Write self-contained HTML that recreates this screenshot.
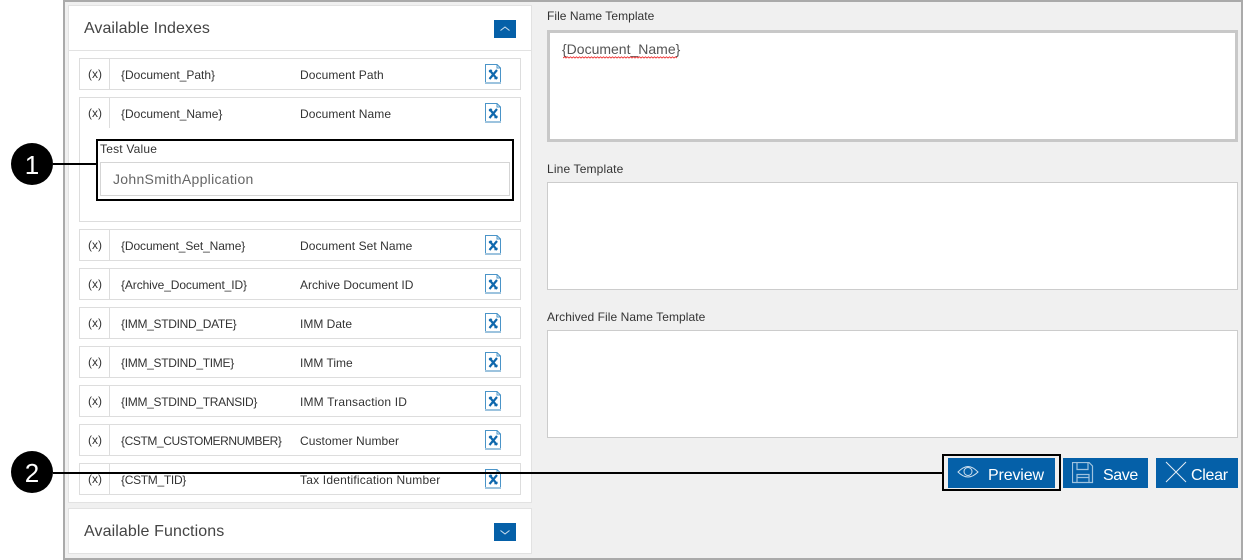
<!DOCTYPE html>
<html><head><meta charset="utf-8"><style>
html,body{margin:0;padding:0;width:1243px;height:560px;overflow:hidden;background:#fff;font-family:"Liberation Sans",sans-serif;color:#333}
.a{position:absolute;box-sizing:border-box}
.t{position:absolute;white-space:nowrap;font-size:12px;line-height:14px;color:#333}
.row{position:absolute;left:79px;width:442px;box-sizing:border-box;background:#fff;border:1px solid #ddd}
.row i{position:absolute;left:29px;top:0;height:30px;width:1px;background:#ddd}
.h{position:absolute;left:84px;font-size:16px;line-height:20px;color:#444;white-space:nowrap}
.ta{position:absolute;left:547px;width:691px;background:#fff;box-sizing:border-box;border:1px solid #ccc}
.btn{position:absolute;top:458px;height:30px;background:#0560a8;color:#fff;font-size:16px;line-height:36px;white-space:nowrap;box-sizing:border-box}
.c{position:absolute;left:11px;width:42px;height:42px;border-radius:50%;background:#000;color:#fff;font-size:26px;line-height:44px;text-align:center}
svg{position:absolute}
</style></head><body>
<div class="a" style="left:63px;top:0;width:1180px;height:560px;background:#f0f0f0;border:2px solid #aaa;border-right-width:2px"></div>

<div class="a" style="left:68px;top:5px;width:464px;height:498px;background:#fff;border:1px solid #e2e2e2"></div>
<div class="a" style="left:69px;top:50px;width:462px;height:1px;background:#e2e2e2"></div>
<div class="h" style="top:19px;letter-spacing:.05px">Available Indexes</div>
<div class="a" style="left:494px;top:20px;width:22px;height:18px;background:#0560a8"></div>
<svg style="left:494px;top:20px" width="22" height="18"><path d="M6.500 10.500 11 7l4.500 3.500" fill="none" stroke="#cfe0ef" stroke-width="1"/></svg>

<svg width="0" height="0" style="position:absolute"><defs><symbol id="d" viewBox="0 0 16 20"><path d="M.5 .5H12L15.500 4V19.500H.5Z" fill="#fff" stroke="#4a94c8" stroke-width="1"/><path d="M12 .5V4H15.500" fill="none" stroke="#4a94c8"/><rect x="0" y="18" width="16" height="2" fill="#9cc3de"/><path d="M4.500 6 12 15M12 6 4.500 15" stroke="#0f68ad" stroke-width="2.200" fill="none"/><path d="M4 8 7 6M9.500 15 12.500 13" stroke="#0f68ad" stroke-width="1.200" fill="none"/></symbol></defs></svg>

<div class="row" style="top:58px;height:32px"><i></i></div>
<div class="t" style="left:88px;top:67px">(x)</div><div class="t" style="left:121px;top:68px">{Document_Path}</div><div class="t" style="left:300px;top:68px;letter-spacing:.08px">Document Path</div>
<svg style="left:485px;top:64px" width="16" height="20"><use href="#d"/></svg>

<div class="row" style="top:97px;height:125px"><i></i></div>
<div class="t" style="left:88px;top:106px">(x)</div><div class="t" style="left:121px;top:107px">{Document_Name}</div><div class="t" style="left:300px;top:107px;letter-spacing:.08px">Document Name</div>
<svg style="left:485px;top:103px" width="16" height="20"><use href="#d"/></svg>
<div class="t" style="left:100px;top:142px;letter-spacing:.2px">Test Value</div>
<div class="a" style="left:100px;top:162px;width:410px;height:34px;background:#fff;border:1px solid #d5d5d5"></div>
<div class="t" style="left:113px;top:171px;font-size:14px;line-height:17px;color:#666;letter-spacing:.3px">JohnSmithApplication</div>
<div class="a" style="left:96px;top:139px;width:418px;height:62px;border:2px solid #000"></div>

<div class="row" style="top:229px;height:32px"><i></i></div>
<div class="t" style="left:88px;top:238px">(x)</div><div class="t" style="left:121px;top:239px;letter-spacing:-.1px">{Document_Set_Name}</div><div class="t" style="left:300px;top:239px;letter-spacing:.06px">Document Set Name</div>
<svg style="left:485px;top:235px" width="16" height="20"><use href="#d"/></svg>

<div class="row" style="top:268px;height:32px"><i></i></div>
<div class="t" style="left:88px;top:277px">(x)</div><div class="t" style="left:121px;top:278px;letter-spacing:-.1px">{Archive_Document_ID}</div><div class="t" style="left:300px;top:278px">Archive Document ID</div>
<svg style="left:485px;top:274px" width="16" height="20"><use href="#d"/></svg>

<div class="row" style="top:307px;height:32px"><i></i></div>
<div class="t" style="left:88px;top:316px">(x)</div><div class="t" style="left:121px;top:317px;letter-spacing:-.3px">{IMM_STDIND_DATE}</div><div class="t" style="left:300px;top:317px">IMM Date</div>
<svg style="left:485px;top:313px" width="16" height="20"><use href="#d"/></svg>

<div class="row" style="top:346px;height:32px"><i></i></div>
<div class="t" style="left:88px;top:355px">(x)</div><div class="t" style="left:121px;top:356px;letter-spacing:-.3px">{IMM_STDIND_TIME}</div><div class="t" style="left:300px;top:356px">IMM Time</div>
<svg style="left:485px;top:352px" width="16" height="20"><use href="#d"/></svg>

<div class="row" style="top:385px;height:32px"><i></i></div>
<div class="t" style="left:88px;top:394px">(x)</div><div class="t" style="left:121px;top:395px;letter-spacing:-.3px">{IMM_STDIND_TRANSID}</div><div class="t" style="left:300px;top:395px;letter-spacing:.17px">IMM Transaction ID</div>
<svg style="left:485px;top:391px" width="16" height="20"><use href="#d"/></svg>

<div class="row" style="top:424px;height:32px"><i></i></div>
<div class="t" style="left:88px;top:433px">(x)</div><div class="t" style="left:121px;top:434px;letter-spacing:-.41px">{CSTM_CUSTOMERNUMBER}</div><div class="t" style="left:300px;top:434px;letter-spacing:.07px">Customer Number</div>
<svg style="left:485px;top:430px" width="16" height="20"><use href="#d"/></svg>

<div class="row" style="top:463px;height:32px"><i></i></div>
<div class="t" style="left:88px;top:472px">(x)</div><div class="t" style="left:121px;top:473px;letter-spacing:-.3px">{CSTM_TID}</div><div class="t" style="left:300px;top:473px;letter-spacing:.2px">Tax Identification Number</div>
<svg style="left:485px;top:469px" width="16" height="20"><use href="#d"/></svg>

<div class="a" style="left:68px;top:508px;width:464px;height:46px;background:#fff;border:1px solid #e2e2e2"></div>
<div class="h" style="top:522px;letter-spacing:.1px">Available Functions</div>
<div class="a" style="left:494px;top:523px;width:22px;height:18px;background:#0560a8"></div>
<svg style="left:494px;top:523px" width="22" height="18"><path d="M6.500 7.500 11 11l4.500-3.500" fill="none" stroke="#cfe0ef" stroke-width="1"/></svg>

<div class="t" style="left:547px;top:9px;letter-spacing:.05px">File Name Template</div>
<div class="ta" style="top:30px;height:112px;border:3px solid #c8c8c8"></div>
<div class="t" style="left:562px;top:41px;font-size:14px;line-height:17px;color:#555">{Document_Name}</div>
<svg style="left:563px;top:56px" width="115" height="4"><path d="M0 2 1.500 .8 3 2 4.500 .8 6 2 7.500 .8 9 2 10.500 .8 12 2 13.500 .8 15 2 16.500 .8 18 2 19.500 .8 21 2 22.500 .8 24 2 25.500 .8 27 2 28.500 .8 30 2 31.500 .8 33 2 34.500 .8 36 2 37.500 .8 39 2 40.500 .8 42 2 43.500 .8 45 2 46.500 .8 48 2 49.500 .8 51 2 52.500 .8 54 2 55.500 .8 57 2 58.500 .8 60 2 61.500 .8 63 2 64.500 .8 66 2 67.500 .8 69 2 70.500 .8 72 2 73.500 .8 75 2 76.500 .8 78 2 79.500 .8 81 2 82.500 .8 84 2 85.500 .8 87 2 88.500 .8 90 2 91.500 .8 93 2 94.500 .8 96 2 97.500 .8 99 2 100.500 .8 102 2 103.500 .8 105 2 106.500 .8 108 2 109.500 .8 111 2 112.500 .8 114 2" fill="none" stroke="#e33" stroke-width=".9"/></svg>

<div class="t" style="left:547px;top:162px;letter-spacing:.15px">Line Template</div>
<div class="ta" style="top:182px;height:108px"></div>
<div class="t" style="left:547px;top:310px;letter-spacing:.07px">Archived File Name Template</div>
<div class="ta" style="top:330px;height:108px"></div>

<div class="a" style="left:53px;top:163px;width:44px;height:2px;background:#000"></div>
<div class="a" style="left:53px;top:472px;width:890px;height:2px;background:#000"></div>
<div class="c" style="top:143px">1</div>
<div class="c" style="top:451px">2</div>

<div class="a" style="left:942px;top:454px;width:119px;height:37px;background:#f0f0f0;border:2px solid #000"></div>
<div class="btn" style="left:948px;width:107px;padding-left:40px;letter-spacing:-.15px">Preview</div>
<svg style="left:957px;top:465px" width="22" height="16"><path d="M1 7C5 3 8 1.500 11 1.500S17 3 21 7C17 11 14 12 11 12S5 11 1 7Z" fill="none" stroke="#cfe0ef" stroke-width="1"/><circle cx="11" cy="6.500" r="4" fill="none" stroke="#cfe0ef" stroke-width="1"/></svg>
<div class="btn" style="left:1063px;width:85px;padding-left:40px;letter-spacing:-.4px">Save</div>
<svg style="left:1072px;top:462px" width="22" height="22"><path d="M.5 .5H17L20.500 4V20.500H.5Z" fill="none" stroke="#9fc3df" stroke-width="1.200"/><path d="M5 .5V7.500H16V.5M5 20.500V12.500H17V20.500M5 15.500H17" fill="none" stroke="#9fc3df" stroke-width="1.200"/></svg>
<div class="btn" style="left:1156px;width:82px;padding-left:35px;letter-spacing:-.3px">Clear</div>
<svg style="left:1165px;top:461px" width="22" height="22"><path d="M1 1 21 21M21 1 1 21" stroke="#e6eff7" stroke-width="1"/></svg>
</body></html>
